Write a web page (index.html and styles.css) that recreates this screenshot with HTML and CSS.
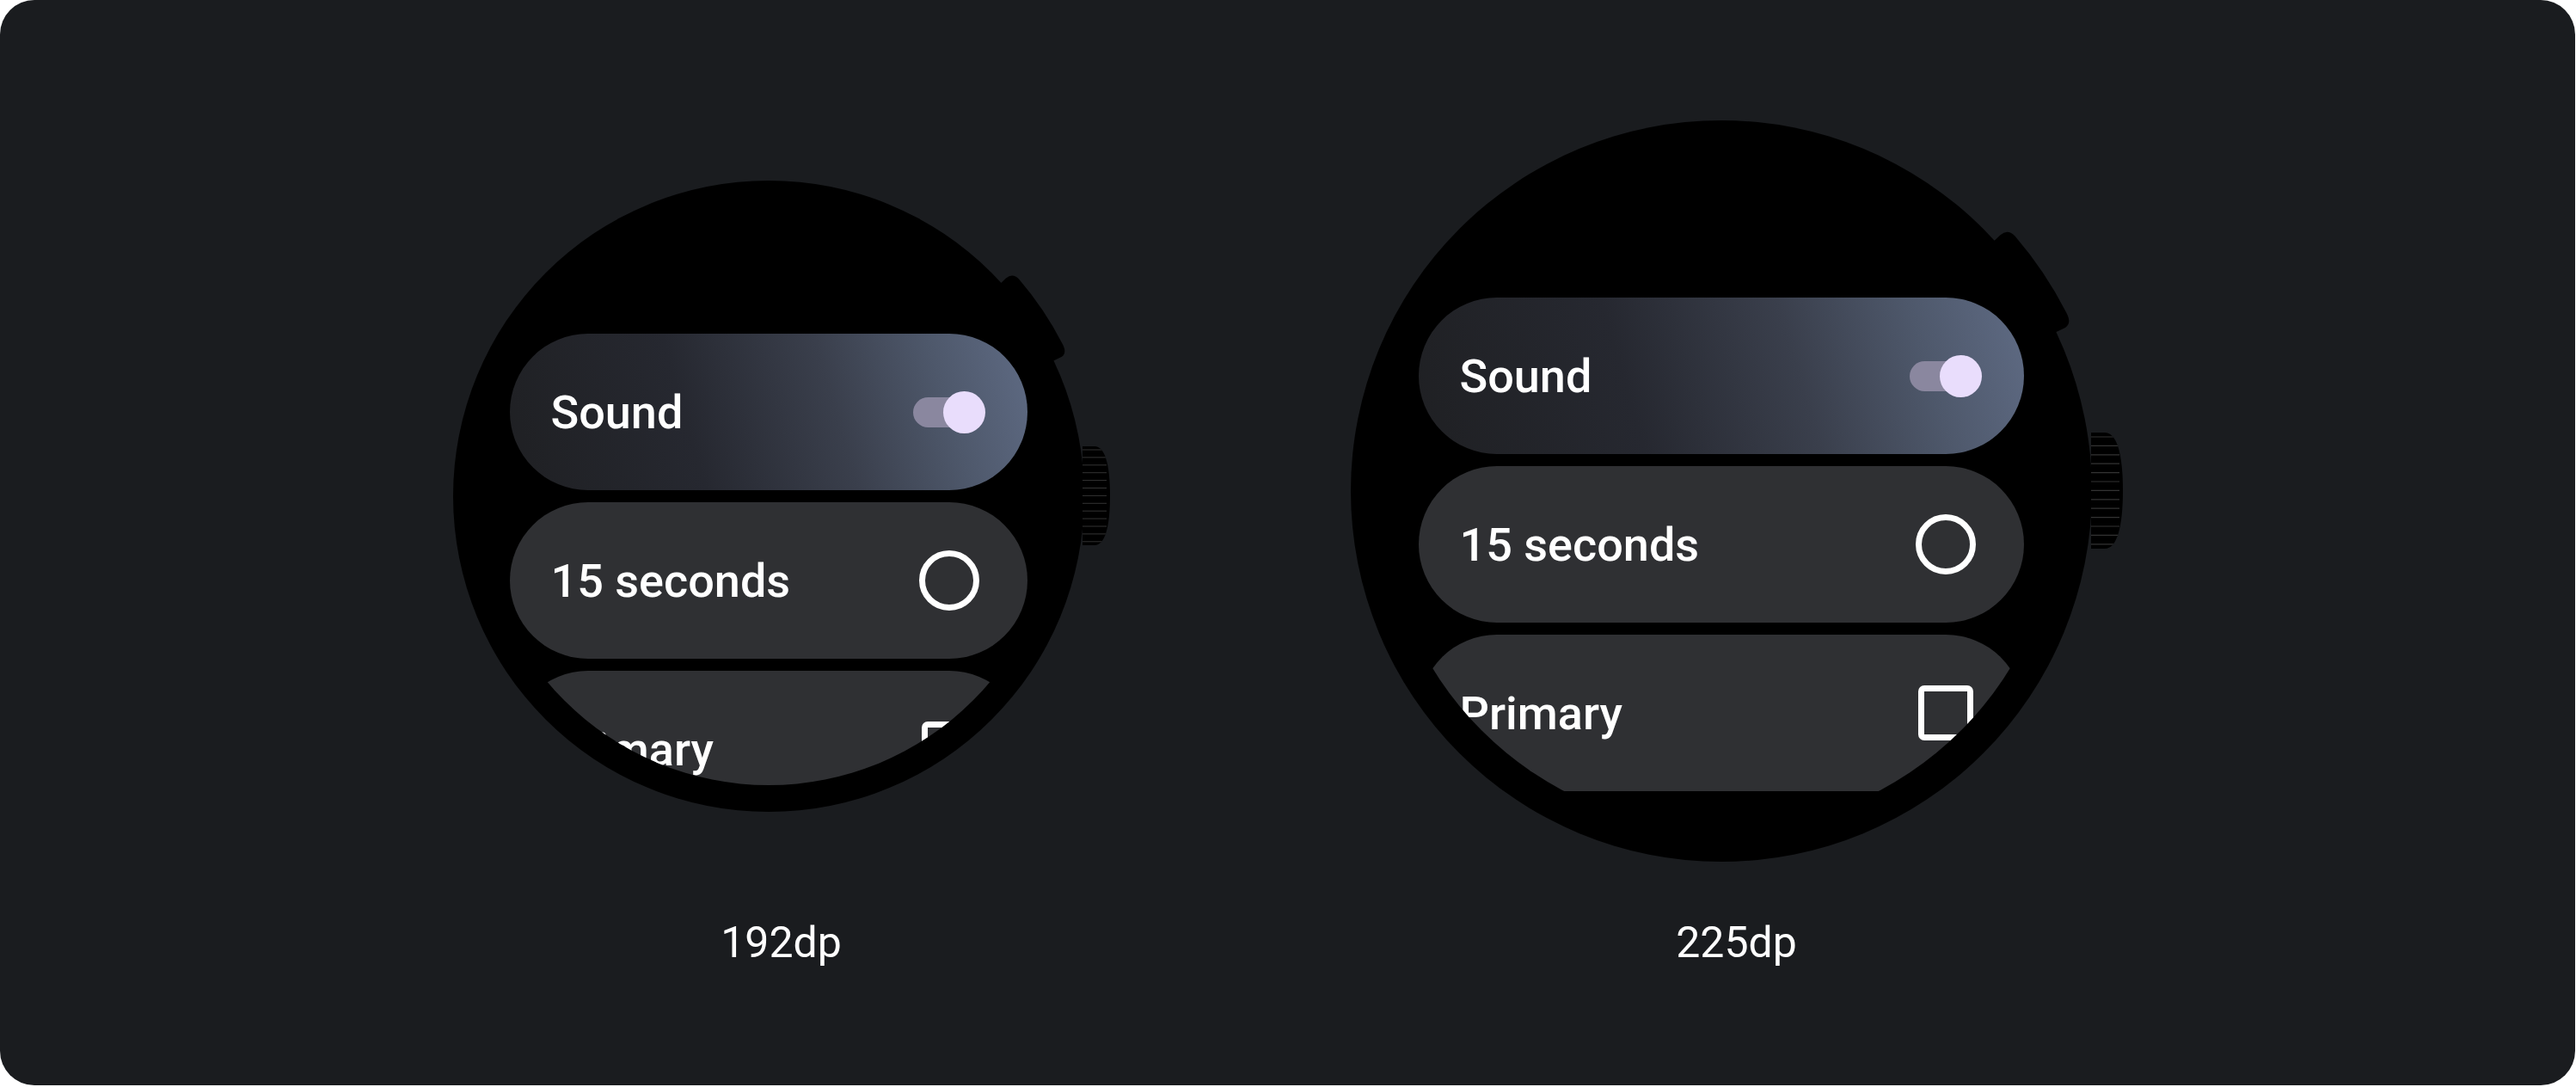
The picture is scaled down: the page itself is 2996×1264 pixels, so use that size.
FILE: index.html
```html
<!DOCTYPE html>
<html lang="en">

<head>
    <meta charset="UTF-8">
    <meta name="viewport" content="width=device-width, initial-scale=1.0">
    <title>Watch sizes</title>
    <link rel="stylesheet" href="styles.css">
</head>

<body>
    <div class="card">

        <!-- small watch -->
        <div class="device">
            <div class="slot">
                <div class="watch watch_small">
                    <svg class="body" width="774" height="734" viewBox="0 0 774 734">
                        <defs>
                            <clipPath id="crownSmall">
                                <path d="M732 309 H746 C758 309 764 330 764 366.5 C764 403 758 424 746 424 H732 Z" />
                            </clipPath>
                        </defs>
                        <path d="M632.4 123.8 L643 113.5 Q650.9 106.9 658 114.5 A385 385 0 0 1 709 190.5 Q714.8 201.9 706 205.8 L692.2 212.6 Z" fill="#000" />
                        <path d="M732 309 H746 C758 309 764 330 764 366.5 C764 403 758 424 746 424 H732 Z" fill="#000" />
                        <g clip-path="url(#crownSmall)" stroke="#333" stroke-width="1">
                            <line x1="732" y1="313" x2="760" y2="313" />
                            <line x1="732" y1="321.9" x2="760" y2="321.9" />
                            <line x1="732" y1="330.8" x2="760" y2="330.8" />
                            <line x1="732" y1="339.7" x2="760" y2="339.7" />
                            <line x1="732" y1="348.6" x2="760" y2="348.6" />
                            <line x1="732" y1="357.5" x2="760" y2="357.5" />
                            <line x1="732" y1="366.4" x2="760" y2="366.4" />
                            <line x1="732" y1="375.3" x2="760" y2="375.3" />
                            <line x1="732" y1="384.2" x2="760" y2="384.2" />
                            <line x1="732" y1="393.1" x2="760" y2="393.1" />
                            <line x1="732" y1="402" x2="760" y2="402" />
                            <line x1="732" y1="410.9" x2="760" y2="410.9" />
                            <line x1="732" y1="419.8" x2="760" y2="419.8" />
                        </g>
                    </svg>
                    <div class="screen">
                        <div class="chip chip_gradient">
                            <span class="chip_label">Sound</span>
                            <span class="control"><span class="switch"></span></span>
                        </div>
                        <div class="chip">
                            <span class="chip_label">15 seconds</span>
                            <span class="control"><span class="radio"></span></span>
                        </div>
                        <div class="chip">
                            <span class="chip_label">Primary</span>
                            <span class="control"><span class="checkbox"></span></span>
                        </div>
                    </div>
                </div>
            </div>
            <p class="size_label">192dp</p>
        </div>

        <!-- large watch -->
        <div class="device">
            <div class="slot">
                <div class="watch watch_large">
                    <svg class="body" width="906" height="862" viewBox="0 0 906 862">
                        <defs>
                            <clipPath id="crownLarge">
                                <path d="M861 363 H877 C891 363 898 388 898 430.5 C898 473 891 498 877 498 H861 Z" />
                            </clipPath>
                        </defs>
                        <path d="M742.9 145.2 L755.5 133.2 Q764.3 125.6 772.5 134.5 A452 452 0 0 1 832.5 224 Q839.3 237.1 829.5 241.7 L813.1 249.6 Z" fill="#000" />
                        <path d="M861 363 H877 C891 363 898 388 898 430.5 C898 473 891 498 877 498 H861 Z" fill="#000" />
                        <g clip-path="url(#crownLarge)" stroke="#333" stroke-width="1.2">
                            <line x1="861" y1="368" x2="894" y2="368" />
                            <line x1="861" y1="378.4" x2="894" y2="378.4" />
                            <line x1="861" y1="388.8" x2="894" y2="388.8" />
                            <line x1="861" y1="399.2" x2="894" y2="399.2" />
                            <line x1="861" y1="409.6" x2="894" y2="409.6" />
                            <line x1="861" y1="420" x2="894" y2="420" />
                            <line x1="861" y1="430.4" x2="894" y2="430.4" />
                            <line x1="861" y1="440.8" x2="894" y2="440.8" />
                            <line x1="861" y1="451.2" x2="894" y2="451.2" />
                            <line x1="861" y1="461.6" x2="894" y2="461.6" />
                            <line x1="861" y1="472" x2="894" y2="472" />
                            <line x1="861" y1="482.4" x2="894" y2="482.4" />
                            <line x1="861" y1="492.8" x2="894" y2="492.8" />
                        </g>
                    </svg>
                    <div class="screen">
                        <div class="chip chip_gradient">
                            <span class="chip_label">Sound</span>
                            <span class="control"><span class="switch"></span></span>
                        </div>
                        <div class="chip">
                            <span class="chip_label">15 seconds</span>
                            <span class="control"><span class="radio"></span></span>
                        </div>
                        <div class="chip">
                            <span class="chip_label">Primary</span>
                            <span class="control"><span class="checkbox"></span></span>
                        </div>
                    </div>
                </div>
            </div>
            <p class="size_label">225dp</p>
        </div>

    </div>
</body>

</html>
```

FILE: styles.css
```css
body {
    margin: 0;
    padding: 0;
    background-color: #fff;
}

.card {
    width: 2995px;
    height: 1262px;
    box-sizing: border-box;
    padding-top: 134px;
    background-color: #1a1c1f;
    border-radius: 40px;
    display: flex;
    justify-content: center;
    gap: 280px;
    font-family: Roboto, "Liberation Sans", sans-serif;
    color: #fff;
}

.device {
    display: flex;
    flex-direction: column;
    align-items: center;
}

.slot {
    height: 880px;
    display: flex;
    align-items: center;
}

/* the black ring is the bezel, the screen sits inside it */
.watch {
    position: relative;
    box-sizing: border-box;
    border-radius: 50%;
    background-color: #000;
}

.watch_small {
    width: 734px;
    height: 734px;
    padding: 31px;
    margin-right: 30px;
    margin-top: 6px;
}

.watch_large {
    width: 862px;
    height: 862px;
    padding: 37px;
    margin-right: 36px;
    margin-bottom: 6px;
}

.body {
    position: absolute;
    left: 0;
    top: 0;
    overflow: visible;
    pointer-events: none;
}

.screen {
    width: 100%;
    height: 100%;
    box-sizing: border-box;
    border-radius: 50%;
    overflow: hidden;
    display: flex;
    flex-direction: column;
    gap: 14px;
}

.watch_small .screen {
    padding: 147px 35px 0;
}

.watch_large .screen {
    padding: 169px 42px 0;
}

.chip {
    flex: none;
    height: 182px;
    box-sizing: border-box;
    padding: 0 49px 0 48px;
    border-radius: 91px;
    background-color: #2f3033;
    display: flex;
    align-items: center;
    justify-content: space-between;
}

.chip_gradient {
    background: linear-gradient(74deg, #1f2023 0%, #262830 35%, #3a3f4c 62%, #4e586b 82%, #5f6b84 100%);
}

.chip_label {
    font-size: 54px;
    font-weight: 500;
    white-space: nowrap;
}

.control {
    width: 84px;
    height: 84px;
    display: flex;
    align-items: center;
    justify-content: center;
}

.switch {
    position: relative;
    width: 84px;
    height: 49px;
}

.switch::before {
    content: "";
    position: absolute;
    left: 0;
    top: 7px;
    width: 70px;
    height: 35px;
    border-radius: 18px;
    background-color: #8a879f;
}

.switch::after {
    content: "";
    position: absolute;
    right: 0;
    top: 0;
    width: 49px;
    height: 49px;
    border-radius: 50%;
    background-color: #e9ddfc;
}

.radio {
    width: 70px;
    height: 70px;
    box-sizing: border-box;
    border: 7px solid #fff;
    border-radius: 50%;
}

.checkbox {
    width: 64px;
    height: 64px;
    box-sizing: border-box;
    border: 7px solid #fff;
    border-radius: 7px;
}

.size_label {
    margin: 57px 0 0;
    font-size: 50px;
    line-height: 50px;
    font-weight: 400;
}
```
